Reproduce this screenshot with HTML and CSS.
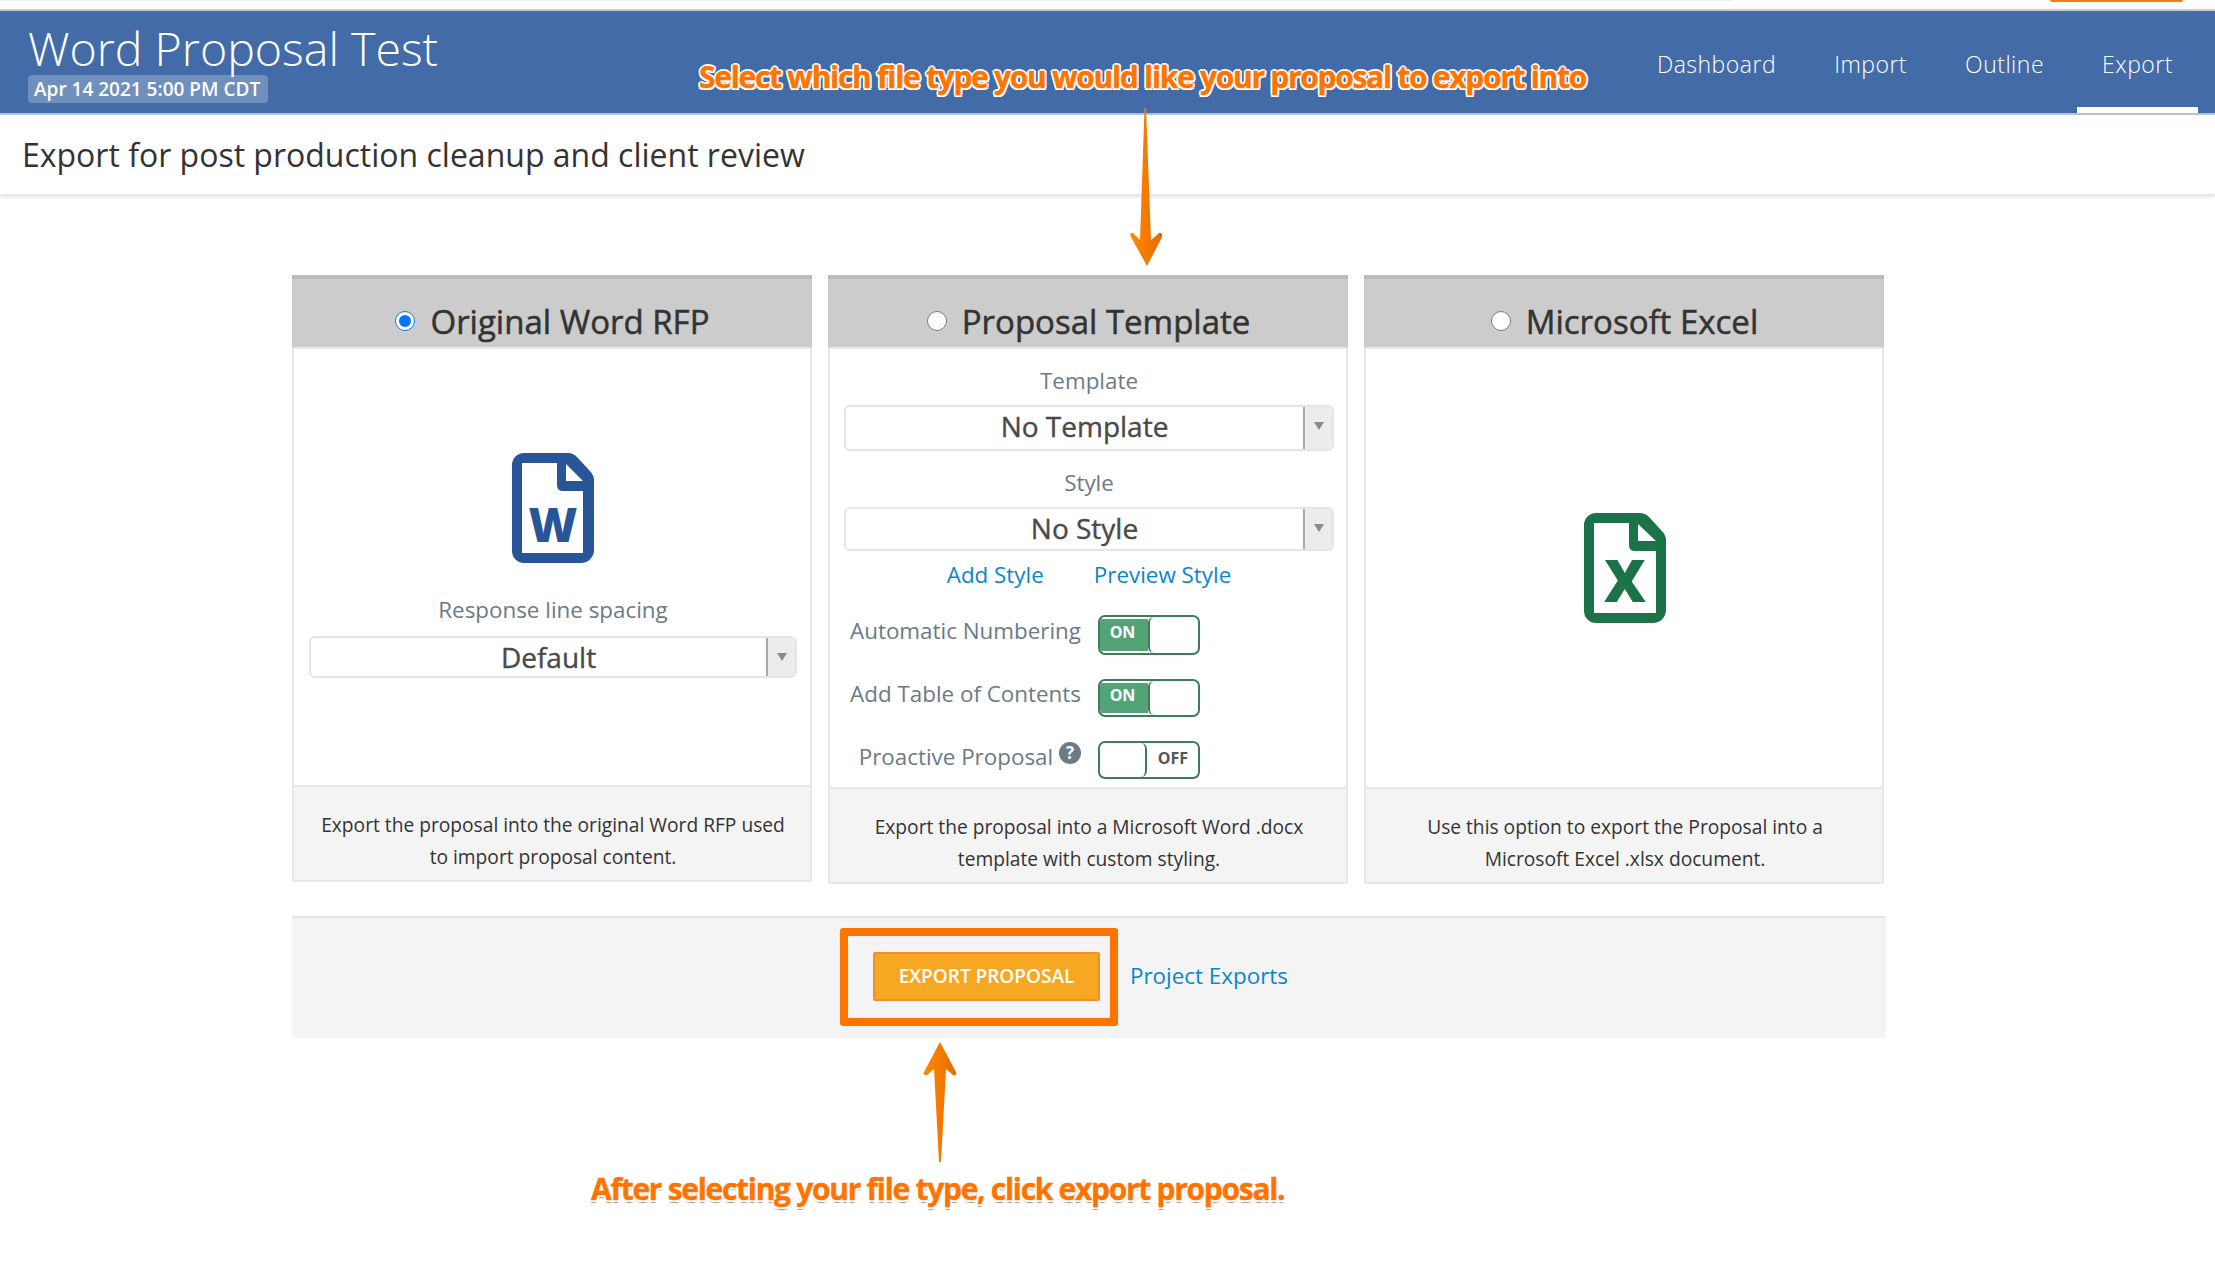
FILE: index.html
```html
<!DOCTYPE html>
<html lang="en">
<head>
<meta charset="utf-8">
<title>Word Proposal Test</title>
<link rel="stylesheet" href="styles.css">
</head>
<body>
<div class="topstrip"><span class="topstrip-grey"></span><span class="topstrip-orange"></span></div>
<header class="appbar">
  <div class="brand">
    <div class="brand-title">Word Proposal Test</div>
    <span class="brand-date">Apr 14 2021 5:00 PM CDT</span>
  </div>
  <nav class="nav">
    <a class="nav-item">Dashboard</a>
    <a class="nav-item">Import</a>
    <a class="nav-item">Outline</a>
    <a class="nav-item nav-active">Export</a>
  </nav>
</header>
<div class="subhead">Export for post production cleanup and client review</div>
<main class="content">
  <div class="cards">
    <section class="card card-short">
      <h2 class="card-head"><input class="radio" type="radio" name="kind" checked><span>Original Word RFP</span></h2>
      <div class="card-body body-word">
        <svg class="file-icon" width="82" height="110" viewBox="0 0 82 110">
          <path class="word-fill" fill-rule="evenodd" d="M12 0H56q5 0 9 4L77 17q5 5 5 10V97a13 13 0 0 1-13 13H12A12 12 0 0 1 0 98V12A12 12 0 0 1 12 0ZM10 10V100H71V38H51q-6 0-6-6V10ZM54 11V28H71Z"/>
          <text class="word-fill file-letter" x="41" y="89" font-size="47" text-anchor="middle">W</text>
        </svg>
        <div class="field-label label-spacing">Response line spacing</div>
        <div class="select select-short"><span class="select-value">Default</span><span class="select-arrow"></span></div>
      </div>
      <div class="card-foot">Export the proposal into the original Word RFP used to import proposal content.</div>
    </section>
    <section class="card">
      <h2 class="card-head"><input class="radio" type="radio" name="kind"><span>Proposal Template</span></h2>
      <div class="card-body body-template">
        <div class="field-label">Template</div>
        <div class="select select-tall"><span class="select-value">No Template</span><span class="select-arrow"></span></div>
        <div class="field-label label-style">Style</div>
        <div class="select"><span class="select-value">No Style</span><span class="select-arrow"></span></div>
        <div class="links"><a class="link">Add Style</a><a class="link">Preview Style</a></div>
        <div class="opt-row opt-first">
          <span class="opt-label">Automatic Numbering</span>
          <span class="toggle toggle-on"><span class="toggle-text">ON</span><span class="toggle-knob"></span></span>
        </div>
        <div class="opt-row">
          <span class="opt-label">Add Table of Contents</span>
          <span class="toggle toggle-on toggle-mid"><span class="toggle-text">ON</span><span class="toggle-knob"></span></span>
        </div>
        <div class="opt-row">
          <span class="opt-label">Proactive Proposal
            <svg class="help" width="22" height="22" viewBox="0 0 22 22"><circle cx="11" cy="11" r="11"/><text x="11" y="17" text-anchor="middle" font-size="17">?</text></svg>
          </span>
          <span class="toggle toggle-off toggle-mid"><span class="toggle-knob"></span><span class="toggle-text">OFF</span></span>
        </div>
      </div>
      <div class="card-foot">Export the proposal into a Microsoft Word .docx<br>template with custom styling.</div>
    </section>
    <section class="card">
      <h2 class="card-head"><input class="radio" type="radio" name="kind"><span>Microsoft Excel</span></h2>
      <div class="card-body body-excel">
        <svg class="file-icon" width="82" height="110" viewBox="0 0 82 110">
          <path class="excel-fill" fill-rule="evenodd" d="M12 0H56q5 0 9 4L77 17q5 5 5 10V97a13 13 0 0 1-13 13H12A12 12 0 0 1 0 98V12A12 12 0 0 1 12 0ZM10 10V100H72V38H51q-6 0-6-6V10ZM54 11V28H72Z"/>
          <text class="excel-fill file-letter" x="41" y="89" font-size="58" text-anchor="middle">X</text>
        </svg>
      </div>
      <div class="card-foot">Use this option to export the Proposal into a<br>Microsoft Excel .xlsx document.</div>
    </section>
  </div>
  <div class="actionbar">
    <button class="export-btn" type="button">EXPORT PROPOSAL</button>
    <a class="link link-exports">Project Exports</a>
  </div>
</main>

<div class="note note-top">Select which file type you would like your proposal to export into</div>
<div class="note note-bottom">After selecting your file type, click export proposal.</div>
<div class="highlight"></div>
<svg class="arrow arrow-down" width="36" height="160" viewBox="0 0 36 160">
  <defs><linearGradient id="ga" x1="0" x2="1" y1="0" y2="0"><stop offset="0" stop-color="#ff8a00"/><stop offset="1" stop-color="#e86a00"/></linearGradient></defs>
  <path fill="url(#ga)" d="M16.5 0H18L23 132L31 125Q35 124 34 129L19 158L3 129Q1 124 5 125L12 132Z"/>
</svg>
<svg class="arrow arrow-up" width="36" height="122" viewBox="0 0 36 122">
  <defs><linearGradient id="gb" x1="0" x2="1" y1="0" y2="0"><stop offset="0" stop-color="#ff8a00"/><stop offset="1" stop-color="#e86a00"/></linearGradient></defs>
  <path fill="url(#gb)" d="M18 1L34 31Q35 35 31 34L24 28L19 121H17L12 28L5 34Q1 35 2 31Z"/>
</svg>
</body>
</html>
```
FILE: styles.css
```css
* { box-sizing: border-box; }
html, body { margin: 0; padding: 0; }
body {
  width: 2215px;
  height: 1272px;
  overflow: hidden;
  position: relative;
  background: #fff;
  font-family: "Open Sans", "Noto Sans", sans-serif;
  color: #333;
}
.topstrip {
  height: 11px;
  border-bottom: 2px solid #c9cdd3;
  display: flex;
  align-items: flex-start;
}
.topstrip-grey { width: 1733px; height: 1px; background: #f1f2f3; }
.topstrip-orange { width: 133px; height: 2px; margin-left: 317px; background: #f27a1a; border-radius: 0 0 3px 3px; }

.appbar {
  height: 104px;
  background: #426ba7;
  border-bottom: 2px solid #b5c4da;
  display: flex;
  justify-content: space-between;
  color: #fff;
}
.brand { padding: 11px 0 0 28px; }
.brand-title { font-size: 46.5px; font-weight: 300; line-height: 52px; }
.brand-date {
  display: block;
  width: 240px;
  margin-top: 1px;
  padding: 0 6px;
  height: 28px;
  line-height: 29px;
  font-size: 19px;
  font-weight: 600;
  background: #6f8fbc;
  border-radius: 4px;
  white-space: nowrap;
}
.nav { display: flex; margin-right: 18px; height: 102px; }
.nav-item {
  padding: 0 25px;
  margin-left: 8px;
  height: 102px;
  line-height: 106px;
  font-size: 23px;
  font-weight: 300;
  color: #fff;
  letter-spacing: 0.5px;
  display: block;
}
.nav-active { box-shadow: inset 0 -6px 0 #fff; margin-right: -1px; }

.subhead {
  height: 80px;
  line-height: 80px;
  padding-left: 22px;
  font-size: 32px;
  color: #333;
  box-shadow: 0 2px 4px rgba(0,0,0,.12);
  border-bottom: 1px solid #e6e6e6;
}
.content { padding: 80px 0 0 292px; }
.cards { display: flex; gap: 16px; align-items: flex-start; }
.card { width: 520px; }
.card-head {
  margin: 0;
  height: 72px;
  background: #ccc;
  border-top: 4px solid #bbb;
  display: flex;
  justify-content: center;
  align-items: center;
  gap: 15px;
  padding: 16px 0 0 1px;
  font-size: 33px;
  font-weight: 500;
  color: #333;
  -webkit-text-stroke: 0.5px #333;
}
.radio { width: 20px; height: 20px; margin: 0; }
.card-body {
  border: 2px solid #e6e9ec;
  border-bottom: 0;
  height: 440px;
}
.card-short .card-body { height: 438px; }
.body-word { padding: 104px 13px 0 15px; }
.body-template { padding: 18px 12px 0 14px; }
.body-excel { display: flex; justify-content: center; align-items: center; padding-left: 2px; }
.file-icon { display: block; margin: 0 auto; }
.word-fill { fill: #285597; }
.excel-fill { fill: #1b7349; }
.file-letter { font-family: "Open Sans", sans-serif; font-weight: 800; }
.field-label {
  font-size: 22.4px;
  line-height: 28px;
  color: #6c7a86;
  text-align: center;
}
.label-spacing { margin-top: 33px; }
.label-style { margin-top: 18px; }
.select {
  margin-top: 10px;
  height: 44px;
  border: 2px solid #e2e6ea;
  border-radius: 6px;
  display: flex;
  background: #fff;
  overflow: hidden;
}
.label-spacing + .select { margin-top: 12px; }
.select-tall { height: 46px; }
.select-short { height: 42px; }
.select-value {
  flex: 1;
  text-align: center;
  padding-left: 20px;
  font-size: 28px;
  font-weight: 500;
  color: #4a4a4a;
  line-height: 39px;
  -webkit-text-stroke: 0.4px #4a4a4a;
}
.select-arrow {
  width: 29px;
  background: #ececec;
  border-left: 2px solid #a9a9a9;
  position: relative;
}
.select-arrow::after {
  content: "";
  position: absolute;
  left: 9px;
  top: 15px;
  border: 5px solid transparent;
  border-top: 8px solid #8a8a8a;
  border-bottom: 0;
}
.links { display: flex; justify-content: center; gap: 50px; margin-top: 10px; height: 28px; }
.link { color: #0a86c7; font-size: 22.4px; line-height: 28px; }
.opt-row { display: flex; align-items: center; gap: 17px; height: 40px; }
.opt-row + .opt-row { margin-top: 23px; }
.opt-row:last-child { margin-top: 22px; }
.opt-first { margin-top: 26px; }
.opt-label {
  width: 237px;
  text-align: right;
  font-size: 22.4px;
  line-height: 28px;
  color: #6c7a86;
  white-space: nowrap;
  padding-bottom: 8px;
}
.help { vertical-align: 1px; fill: #6c7a86; }
.help text { fill: #fff; font-family: "Open Sans", sans-serif; font-weight: 700; }
.toggle {
  width: 102px;
  height: 40px;
  border: 2px solid #3f7d5a;
  border-radius: 7px;
  display: flex;
  overflow: hidden;
  flex: none;
}
.toggle-mid { height: 38px; }
.toggle-text { font-size: 16px; font-weight: 700; display: flex; align-items: center; justify-content: center; }
.toggle-on .toggle-text {
  width: 48px;
  margin: 2px 0;
  color: #fff;
  background: #52a477;
  padding: 0 3px 6px 0;
}
.toggle-on .toggle-knob { flex: 1; border-left: 2px solid #3f7d5a; border-radius: 6px; }
.toggle-off .toggle-knob { width: 47px; border-right: 2px solid #3f7d5a; border-radius: 6px; }
.toggle-off .toggle-text { flex: 1; color: #555; padding: 0 0 4px 1px; }
.card-foot {
  height: 97px;
  background: #f4f4f4;
  border: 2px solid #e6e9ec;
  padding: 22px 18px 0 20px;
  text-align: center;
  font-size: 19.2px;
  line-height: 32px;
  color: #333;
}
.actionbar {
  width: 1594px;
  height: 122px;
  margin-top: 32px;
  background: #f4f4f4;
  border-top: 2px solid #e5e5e5;
  display: flex;
  align-items: flex-start;
  padding: 34px 0 0 581px;
  gap: 30px;
}
.export-btn {
  width: 227px;
  height: 49px;
  background: #f7a823;
  border: 2px solid #f08f2b;
  border-radius: 2px;
  color: #fff;
  font-family: "Open Sans", sans-serif;
  font-size: 19px;
  font-weight: 600;
  padding: 0 0 2px;
}
.link-exports { line-height: 48px; }

/* annotations laid over the page */
.note {
  position: absolute;
  font-weight: 700;
  color: #ff7300;
  white-space: nowrap;
  -webkit-text-stroke: 0.4px #ff7300;
  text-shadow: 2px 0 0 #fff, -2px 0 0 #fff, 0 2px 0 #fff, 0 -2px 0 #fff, 1.5px 1.5px 0 #fff, -1.5px 1.5px 0 #fff, 1.5px -1.5px 0 #fff, -1.5px -1.5px 0 #fff, 0 3px 1px rgba(110,110,110,.7);
}
.note-top { left: 699px; top: 57px; font-size: 30px; line-height: 40px; letter-spacing: -1.3px; }
.note-bottom { left: 591px; top: 1169px; font-size: 30px; line-height: 40px; letter-spacing: -1.3px; }
.highlight {
  position: absolute;
  left: 840px;
  top: 928px;
  width: 278px;
  height: 98px;
  border: 8px solid #ff7300;
  border-radius: 3px;
}
.arrow { position: absolute; }
.arrow-down { left: 1128px; top: 108px; }
.arrow-up { left: 922px; top: 1041px; }
```
